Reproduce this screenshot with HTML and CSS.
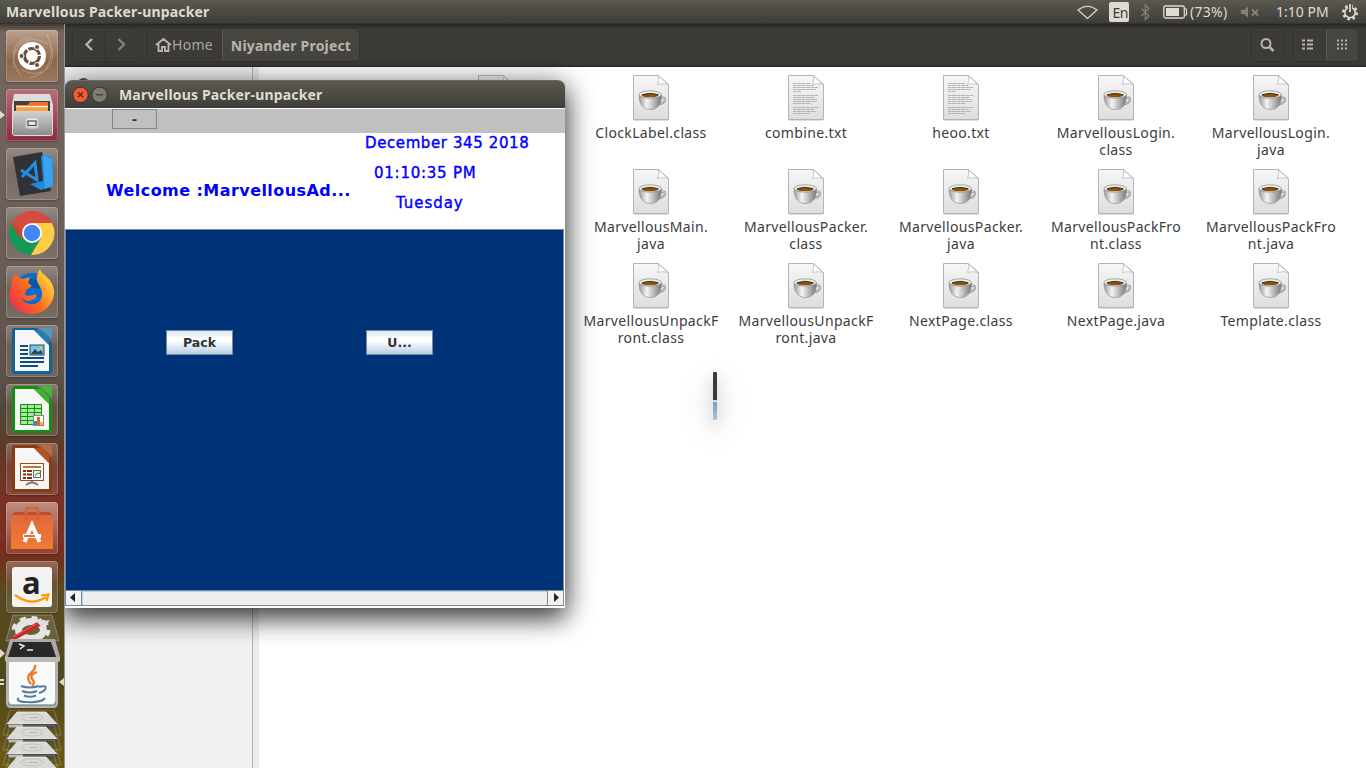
FILE: index.html
```
<!DOCTYPE html>
<html lang="en">
<head>
<meta charset="utf-8">
<title>Marvellous Packer-unpacker</title>
<link rel="stylesheet" href="styles.css">
</head>
<body>
<svg class="defs" width="0" height="0">
  <defs>
    <linearGradient id="paper" x1="0" y1="0" x2="0" y2="1"><stop offset="0" stop-color="#f6f6f6"/><stop offset="1" stop-color="#dedede"/></linearGradient>
    <linearGradient id="cup" x1="0" y1="0" x2="1" y2="0"><stop offset="0" stop-color="#999"/><stop offset=".35" stop-color="#f4f4f4"/><stop offset="1" stop-color="#777"/></linearGradient>
    <linearGradient id="steel" x1="0" y1="0" x2="0" y2="1"><stop offset="0" stop-color="#d2d2d2"/><stop offset="1" stop-color="#8c8c8c"/></linearGradient>
    <linearGradient id="bag" x1="0" y1="0" x2="0" y2="1"><stop offset="0" stop-color="#e0693c"/><stop offset="1" stop-color="#f07a35"/></linearGradient>
    <linearGradient id="fox" x1="0" y1=".8" x2="1" y2=".1"><stop offset="0" stop-color="#f0304c"/><stop offset=".45" stop-color="#fb6b20"/><stop offset="1" stop-color="#fff040"/></linearGradient>
    <symbol id="page" viewBox="0 0 36 46">
      <path d="M.5.5H25.500L35.500 9.500V44.500H.5Z" fill="url(#paper)" stroke="#b4b4b4"/>
      <path d="M1 45.500H35" stroke="#ddd"/>
      <path d="M25.500 1C26 4 25.500 7 24.500 9.500C28 8.500 32 8.500 35 9.500Z" fill="#fff" stroke="#b8b8b8" stroke-width=".8"/>
    </symbol>
    <symbol id="java" viewBox="0 0 36 46">
      <use href="#page" width="36" height="46"/>
      <path d="M27.500 23C34 20.500 33.500 28 25.500 29.500" fill="none" stroke="#8a8a8a" stroke-width="2"/>
      <path d="M27.500 23C34 20.500 33.500 28 25.500 29.500" fill="none" stroke="#e8e8e8" stroke-width=".8"/>
      <path d="M6 20C6 29 10 34.500 17.500 34.500S28.500 29 28.500 20Z" fill="url(#cup)" stroke="#888" stroke-width=".6"/>
      <ellipse cx="17.200" cy="19.500" rx="11.200" ry="3.700" fill="#eee" stroke="#888" stroke-width=".7"/>
      <ellipse cx="17" cy="20.300" rx="8.500" ry="2" fill="#8a5310"/>
      <path d="M9 19.700Q17 17 25.500 19.700" fill="none" stroke="#49300e"/>
    </symbol>
    <symbol id="txt" viewBox="0 0 36 46">
      <use href="#page" width="36" height="46"/>
      <path d="M5 8.500H22M5 10.500H25M5 12.500H30M5 14.500H28M5 16.500H13M5 20.500H30M5 22.500H27M5 24.500H29M5 26.500H29M5 28.500H23M5 32.500H30M5 34.500H26M5 36.500H28M5 38.500H22" stroke="#b4b4b4" stroke-width="1" stroke-dasharray="3 .5 5 .5"/>
    </symbol>
    <symbol id="disk" viewBox="0 0 60 27">
      <path d="M8 0H52L59 25H1Z" fill="none" stroke="#ffffff38"/>
      <path d="M15 2H44L55 14H5Z" fill="#d9d9d6" stroke="#eee" stroke-width=".8"/>
      <path d="M5 14H55V17Q55 18.500 53 18.500H7Q5 18.500 5 17Z" fill="#4a4a48"/><path d="M6 14.500H21V17.500H7Z" fill="#b5b5b2"/>
      <ellipse cx="30" cy="7.500" rx="11" ry="3.500" fill="none" stroke="#bdbdba" stroke-width=".8"/><path d="M27 7.500H36" stroke="#aaa" stroke-width=".8"/>
    </symbol>
  </defs>
</svg>

<header class="panel">
  <span class="panel-title">Marvellous Packer-unpacker</span>
  <svg class="indicators-a" width="80" height="24" viewBox="0 0 80 24">
    <path d="M1 10Q10.500 2.500 20 10L10.500 18.500Z" fill="none" stroke="#dfdbd2" stroke-width="1.200"/>
    <rect x="32" y="2" width="20" height="20" rx="2" fill="#dfdbd2"/>
    <text x="35.500" y="17.500" class="lang">En</text>
    <path d="M64.500 8.500L72 16L68.300 19.500V5L72 8.500L64.500 16" fill="none" stroke="#85827a" stroke-width="1.200"/>
  </svg>
  <svg class="battery" width="25" height="24" viewBox="0 0 25 24"><rect x=".8" y="6" width="20.500" height="12" rx="1.500" fill="none" stroke="#dfdbd2" stroke-width="1.300"/><path d="M3 8H16V16H3Z" fill="#dfdbd2"/><path d="M21.500 9H23.500V15H21.500" fill="none" stroke="#dfdbd2" stroke-width="1.200"/></svg>
  <span class="charge">(73%)</span>
  <svg class="mute" width="18" height="24" viewBox="0 0 18 24"><path d="M0 10H3L7 6.500V17.500L3 14H0Z" fill="#858279"/><path d="M11 9.500L17 15.500M17 9.500L11 15.500" stroke="#858279" stroke-width="1.800"/></svg>
  <span class="clock">1:10 PM</span>
  <svg class="gear" width="18" height="24" viewBox="0 0 18 24"><circle cx="9" cy="12.500" r="6.700" fill="none" stroke="#dfdbd2" stroke-width="2.600" stroke-dasharray="2.600 2.660"/><circle cx="9" cy="12.500" r="5.200" fill="none" stroke="#dfdbd2" stroke-width="1.600"/><path d="M9 3V12" stroke="#4a4943" stroke-width="4"/><path d="M9 4V12" stroke="#dfdbd2" stroke-width="1.800"/></svg>
</header>

<div class="desktop">
  <nav class="launcher">
    <div class="tile dash"><svg width="52" height="52" viewBox="0 0 52 52"><g fill="none" stroke="#ffffff38" stroke-width="1.200"><path d="M8 38C4 16 22 2 42 14M15 46C2 28 6 10 26 7M44 14C54 36 34 50 16 40M41 4C50 24 44 44 24 48"/></g><circle cx="26" cy="26" r="14" fill="#fff"/><circle cx="26" cy="26" r="7.500" fill="none" stroke="#66503f" stroke-width="3.200" stroke-dasharray="14.200 1.500"/><g fill="#66503f" stroke="#fff"><circle cx="15.500" cy="26" r="2.500"/><circle cx="31" cy="17" r="2.500"/><circle cx="31" cy="35" r="2.500"/></g></svg></div>
    <div class="tile files running"><svg width="52" height="52" viewBox="0 0 52 52"><path d="M8 5H44L47 16V44Q47 47 44 47H9Q6 47 6 44V16Z" fill="#dcdcdc"/><path d="M8 12H44V25H8Z" fill="#4b4039"/><path d="M10 16H22L24 13H42V25H10Z" fill="#ed7332"/><path d="M10 18H42V25H10Z" fill="#f6a04b"/><path d="M10 17.500H42" stroke="#fff0d0" stroke-width="1.300"/><path d="M7 22H46V46H7Z" fill="url(#steel)"/><rect x="20" y="29" width="12" height="10" rx="2" fill="#eee" stroke="#c5c5c5" stroke-width="1.500"/><rect x="22" y="32" width="8" height="4.500" fill="#eee" stroke="#444" stroke-width="1.200"/></svg></div>
    <div class="tile"><svg width="52" height="52" viewBox="0 0 52 52"><path d="M7 9L36 4L45 43L14 48Z" fill="#303236"/><path d="M35 8L41 7L47 11V38L35 42L24 36L37 33Z" fill="#2189dd"/><path d="M37 8L38 7L46 11L47 38L39 41Z" fill="#39a3ef"/><path d="M15 22L31 32L29 15L16 29" fill="none" stroke="#258de2" stroke-width="3"/></svg></div>
    <div class="tile"><svg width="52" height="52" viewBox="0 0 52 52"><circle cx="26" cy="26" r="22" fill="#cb4437"/><path d="M26 26L15 32L5 17A22 22 0 0 0 25 48L35 31Z" fill="#149a55"/><path d="M26 16H46A22 22 0 0 1 25 48L35 31Z" fill="#ffcc46"/><path d="M7 15A22 22 0 0 1 46 16H26L17 26Z" fill="#d54c3f"/><circle cx="26" cy="26" r="10" fill="#fff"/><circle cx="26" cy="26" r="8.200" fill="#4285f4"/></svg></div>
    <div class="tile"><svg width="52" height="52" viewBox="0 0 52 52"><circle cx="26" cy="25" r="18" fill="#0a6ccc"/><path d="M19 16Q27 9 33 16L34 23L26 22Z" fill="#0a55ac"/><path d="M9 8Q12 12 17 13L24 11L22 17L26 20L20 24L19 29Q24 31 30 28Q31 33 26 34C21 37 17 33 15 31C19 41 35 41 36 29C37 20 29 18 31 10Q32 5 34 3C35 9 46 11 48 24C49 38 38 48 26 48C8 48 0 34 5 20Q6 12 9 8Z" fill="url(#fox)"/></svg></div>
    <div class="tile"><svg width="52" height="52" viewBox="0 0 52 52"><path d="M9 3H31L46 18V46Q46 49 43 49H9Q6 49 6 46V6Q6 3 9 3Z" fill="#136295"/><path d="M34 3H46V14Z" fill="#4b9ac5"/><path d="M9 5H28L43 20V46H9Z" fill="#f6f6f6"/><path d="M28 5L43 20V13L35 5Z" fill="#1b80ba"/><path d="M14 21H22M14 25H22M14 29H22M14 33H38M14 37H38M14 41H32" stroke="#0c4f7c" stroke-width="2"/><rect x="24" y="20" width="14" height="10" fill="#78c2e5" stroke="#174c68"/><path d="M25 29L29 24L32 27L35 25L37 29Z" fill="#31474c"/><circle cx="35" cy="23" r="1.500" fill="#f9c537"/></svg></div>
    <div class="tile"><svg width="52" height="52" viewBox="0 0 52 52"><path d="M9 2H31L46 17V46Q46 49 43 49H9Q6 49 6 46V5Q6 2 9 2Z" fill="#178c10"/><path d="M34 2H46V14Z" fill="#3dbb35"/><path d="M9 5H28L43 20V46H9Z" fill="#f6f6f6"/><path d="M28 5L43 20V13L35 5Z" fill="#36b82a"/><rect x="14" y="20" width="22" height="21" fill="#a5e89b"/><path d="M14.500 20.500H35.500V40.500H14.500ZM14 24.500H36M14 28.500H36M14 32.500H36M14 36.500H36M21.500 20V41M28.500 20V41" fill="none" stroke="#16910f"/><rect x="27.500" y="31.500" width="10" height="10" fill="#f8f8f8" stroke="#888"/><path d="M28 37H31V41H28Z" fill="#3589cb"/><path d="M31 33H34V41H31Z" fill="#e06423"/><path d="M34 38H37V41H34Z" fill="#eeb73c"/></svg></div>
    <div class="tile"><svg width="52" height="52" viewBox="0 0 52 52"><path d="M9 2H31L46 17V46Q46 49 43 49H9Q6 49 6 46V5Q6 2 9 2Z" fill="#8a3b10"/><path d="M34 2H46V14Z" fill="#c0683c"/><path d="M9 5H28L43 20V46H9Z" fill="#f6f6f6"/><path d="M28 5L43 20V13L35 5Z" fill="#b5541f"/><rect x="14.500" y="20.500" width="23" height="17" fill="#fff" stroke="#a54717"/><path d="M17 24H35" stroke="#d66c2a" stroke-width="2"/><path d="M17 28H26M17 31.500H26M17 35H26" stroke="#793010" stroke-width="2" stroke-dasharray="3 1 5"/><rect x="27.500" y="27.500" width="7" height="7" fill="#eee" stroke="#666"/><path d="M29 33L31 30L33 31L35 28" fill="none" stroke="#269c34"/><path d="M26 38V40M20 42Q26 37 32 42" fill="none" stroke="#777" stroke-width="2"/></svg></div>
    <div class="tile software"><svg width="52" height="52" viewBox="0 0 52 52"><path d="M5 13H47V47H5Z" fill="url(#bag)"/><path d="M5 13L9 10H43L47 13Z" fill="#bd4d2d"/><path d="M20 18V9Q20 6 23 6H29Q32 6 32 9V18" fill="none" stroke="#d76142" stroke-width="3"/><path d="M18.500 40L26 23L33.500 40" fill="none" stroke="#fff" stroke-width="4"/><path d="M17 34H35" stroke="#fff" stroke-width="4"/><path d="M18 34H29" stroke="#e95420" stroke-width="1.700"/></svg></div>
    <div class="tile"><svg width="52" height="52" viewBox="0 0 52 52"><rect x="6" y="6" width="40" height="40" rx="3" fill="#f3f3f3"/><text x="16" y="32.500" class="amazon">a</text><path d="M9 34Q25 46 40 36M35 34.500L42.500 33.500L40.500 40" fill="none" stroke="#ff9900" stroke-width="2.200"/></svg></div>
    <svg class="stack" width="65" height="155" viewBox="0 0 65 155">
      <path d="M13 2H52L59 28H6Z" fill="#ffffff20" stroke="#ffffff45"/>
      <ellipse cx="31" cy="17" rx="12.500" ry="8.500" fill="none" stroke="#e4e4e2" stroke-width="7"/><ellipse cx="31" cy="17" rx="17.500" ry="12" fill="none" stroke="#e4e4e2" stroke-width="4" stroke-dasharray="6 5.700"/>
      <path d="M11 24.500L37 9L41 12.500L15 27Z" fill="#c7272b"/><path d="M13 24L37 10.500" stroke="#e8696b"/><path d="M37 9L40 5L44 8L50 7L47 11L41 13Z" fill="#ddd"/>
      <path d="M10 26H55L60 44V48H5V44Z" fill="#aaa"/><path d="M13 29H51L56 44H8Z" fill="#292929"/><path d="M19 31L24 33L20 36M27 37H33" fill="none" stroke="#eee" stroke-width="1.500"/>
      <rect x="7.500" y="46.500" width="49" height="47" rx="3" fill="#fafafa" stroke="#b5b3ae" stroke-width="3"/><path d="M9 89V92H55V89" fill="none" stroke="#54708c"/>
      <path d="M5 44H60V47Q60 49 57 49H8Q5 49 5 47Z" fill="#bbb9b5"/>
      <path d="M35 52C37 60 22 60 31 71M37 59C31 61 30 64 33 67Q35 70 32 73" fill="none" stroke="#e97b25" stroke-width="2.300"/>
      <path d="M21 73Q29 76 39 73M22 78Q30 81 37 78M24 82.500Q30 85 36 82.500M19 85C11 90 42 91 45 85M39 74C48 71 48 77 39 80" fill="none" stroke="#557b9f" stroke-width="2"/>
      <use href="#disk" x="2" y="97" width="60" height="27"/><use href="#disk" x="2" y="112" width="60" height="27"/><use href="#disk" x="2" y="127" width="60" height="27"/><use href="#disk" x="2" y="142" width="60" height="27"/>
      <path d="M0 36L5 40.500L0 45ZM64 65L59 69L64 73Z" fill="#dfdbd2"/><path d="M0 67H4M0 71H4" stroke="#dfdbd2" stroke-width="2"/>
    </svg>
  </nav>

  <main class="browser">
    <div class="toolbar">
      <div class="group nav-group"><span class="cell"><svg width="32" height="30" viewBox="0 0 32 30"><path d="M19 9L13.500 14.500L19 20" fill="none" stroke="#bab6aa" stroke-width="2.300"/></svg></span><span class="cell split"><svg width="31" height="30" viewBox="0 0 31 30"><path d="M12.500 9L18 14.500L12.500 20" fill="none" stroke="#85827a" stroke-width="2.300"/></svg></span></div>
      <div class="group path-group"><span class="cell home"><svg width="17" height="16" viewBox="0 0 17 16"><path d="M1 8L8.500 2L16 8M3.500 7V14H7V10H10V14H13.500V7" fill="none" stroke="#bab6aa" stroke-width="1.900"/></svg>Home</span><span class="cell current">Niyander Project</span></div>
      <div class="group search"><svg width="31" height="30" viewBox="0 0 31 30"><circle cx="14" cy="13.500" r="4.500" fill="none" stroke="#bab6aa" stroke-width="2"/><path d="M17.500 17L21.500 21" stroke="#bab6aa" stroke-width="2.500"/></svg></div>
      <div class="group view-group"><span class="cell"><svg width="32" height="30" viewBox="0 0 32 30"><path d="M8 10.500H11M13 10.500H19M8 14.500H11M13 14.500H19M8 18.500H11M13 18.500H19" stroke="#bab6aa" stroke-width="2"/></svg></span><span class="cell current"><svg width="31" height="30" viewBox="0 0 31 30"><path d="M10 10.500H20M10 14.500H20M10 18.500H20" stroke="#bab6aa" stroke-width="2" stroke-dasharray="2"/></svg></span></div>
    </div>
    <div class="panes">
      <aside class="sidebar"><span class="recent"></span></aside>
      <section class="grid">
        <div class="file"><svg class="faded"><use href="#page"/></svg></div>
        <div class="file"><svg><use href="#java"/></svg>ClockLabel.class</div>
        <div class="file"><svg><use href="#txt"/></svg>combine.txt</div>
        <div class="file"><svg><use href="#txt"/></svg>heoo.txt</div>
        <div class="file"><svg><use href="#java"/></svg>MarvellousLogin.<br>class</div>
        <div class="file"><svg><use href="#java"/></svg>MarvellousLogin.<br>java</div>
        <div class="file"></div>
        <div class="file"><svg><use href="#java"/></svg>MarvellousMain.<br>java</div>
        <div class="file"><svg><use href="#java"/></svg>MarvellousPacker.<br>class</div>
        <div class="file"><svg><use href="#java"/></svg>MarvellousPacker.<br>java</div>
        <div class="file"><svg><use href="#java"/></svg>MarvellousPackFro<br>nt.class</div>
        <div class="file"><svg><use href="#java"/></svg>MarvellousPackFro<br>nt.java</div>
        <div class="file"></div>
        <div class="file"><svg><use href="#java"/></svg>MarvellousUnpackF<br>ront.class</div>
        <div class="file"><svg><use href="#java"/></svg>MarvellousUnpackF<br>ront.java</div>
        <div class="file"><svg><use href="#java"/></svg>NextPage.class</div>
        <div class="file"><svg><use href="#java"/></svg>NextPage.java</div>
        <div class="file"><svg><use href="#java"/></svg>Template.class</div>
      </section>
    </div>
  </main>
</div>

<div class="sliver"></div>

<section class="window">
  <div class="titlebar">
    <svg width="36" height="18" viewBox="0 0 36 18"><circle cx="8.500" cy="8.800" r="7.700" fill="#ee5f32" stroke="#33322e"/><path d="M6 6.300L11 11.300M11 6.300L6 11.300" stroke="#5e2614" stroke-width="1.300"/><circle cx="27.500" cy="8.800" r="7.700" fill="#7c7b74" stroke="#33322e"/><path d="M24 8.800H31" stroke="#3a3934" stroke-width="1.200"/></svg>
    <span>Marvellous Packer-unpacker</span>
  </div>
  <div class="menubar"><div class="dash-button">-</div></div>
  <div class="banner">
    <div class="welcome">Welcome :MarvellousAd...</div>
    <div class="when"><div class="date">December 345 2018</div><div class="time">01:10:35 PM</div><div class="day">Tuesday</div></div>
  </div>
  <div class="canvas"><div class="button">Pack</div><div class="button">U...</div></div>
  <div class="scrollbar">
    <svg class="arrow" width="15" height="14" viewBox="0 0 15 14"><path d="M9 2V11L4 6.500Z" fill="#222"/></svg>
    <div class="track"></div>
    <svg class="arrow" width="15" height="14" viewBox="0 0 15 14"><path d="M6 2V11L11 6.500Z" fill="#222"/></svg>
  </div>
</section>
</body>
</html>
```
FILE: styles.css
```
* { box-sizing: border-box; }
body { margin: 0; width: 1366px; height: 768px; overflow: hidden; position: relative; display: flex; flex-direction: column; background: #fff; font-family: "Noto Sans", "Open Sans", sans-serif; font-size: 14px; color: #3c3c3c; }
svg { display: block; flex: none; }
.defs { position: absolute; }

.panel { height: 24px; flex: none; display: flex; align-items: center; padding: 0 7px 0 6px; background: linear-gradient(#5b594f, #3e3d38 95%, #2d2c29); color: #dfdbd2; line-height: 24px; }
.panel-title { flex: none; font-weight: 700; width: 1071px; letter-spacing: .17px; white-space: nowrap; }
.indicators-a { margin-right: 6px; }
.lang { font: 14px "Noto Sans", sans-serif; fill: #3c3b37; letter-spacing: -.6px; }
.charge { width: 51px; flex: none; padding-left: 2px; letter-spacing: .3px; }
.mute { margin-left: 2px; }
.clock { flex: none; margin-left: 17px; width: 65px; white-space: nowrap; }
.amazon { font: 700 31px "Open Sans", sans-serif; fill: #222; }

.desktop { flex: 1; display: flex; min-height: 0; }
.launcher { width: 65px; flex: none; display: flex; flex-direction: column; gap: 7px; padding: 6px 0 0 6px; border-right: 1px solid #8e98a4; background: linear-gradient(#403a35, #75675f 8px, #6b5d55 30%, #5c5048 48%, #504634 52%, #603a28 57%, #7b3024 65%, #74301f 72%, #594a22 76%, #51471d 88%, #685b16); }
.tile { width: 52px; height: 52px; flex: none; border-radius: 4px; position: relative; background: linear-gradient(#ffffff42, #ffffff10 45%, #ffffff20); box-shadow: inset 0 0 0 1px #ffffff35, 0 1px 2px #0004; }
.dash { background: linear-gradient(#bba18d, #8e674a 60%, #9c7a61); }
.files { background: linear-gradient(#b96d7b, #8b2a3e); }
.software { background: linear-gradient(#be8c80, #91402f); }
.running::before { content: ""; position: absolute; left: -6px; top: 22px; border: 4px solid transparent; border-left: 5px solid #dfdbd2; border-right: 0; }
.stack { margin: -7px 0 0 -6px; }

.browser { flex: 1; display: flex; flex-direction: column; }
.toolbar { height: 43px; flex: none; display: flex; padding: 4px 7px 0 7px; background: linear-gradient(#282724, #3c3b37 5px, #3c3b37 39px, #363531); color: #aaa79d; border-bottom: 1px solid #282724; }
.group { height: 34px; display: flex; align-items: center; border: 1px solid #33322e; border-radius: 5px; box-shadow: inset 0 0 0 1px #403f3b; }
.cell { height: 32px; display: flex; align-items: center; justify-content: center; }
.nav-group { width: 66px; margin-right: 9px; }
.nav-group .cell { width: 32px; }
.split { border-left: 1px solid #32312d; }
.path-group { width: 213px; }
.home { width: 74px; padding-bottom: 1px; padding-right: 2px; color: #aaa79d; letter-spacing: .3px; }
.current { background: #464540; border-left: 1px solid #5a584f; border-radius: 0 4px 4px 0; }
.path-group .current { width: 137px; font-weight: 700; color: #bab6aa; white-space: nowrap; letter-spacing: .18px; }
.search { width: 33px; margin-left: auto; margin-right: 9px; }
.view-group { width: 66px; }
.view-group .cell { width: 32px; }

.panes { flex: 1; display: flex; min-height: 0; background: #fff; }
.sidebar { width: 194px; flex: none; background: #f2f1f0; border-right: 6px solid #edecea; box-shadow: inset -1px 0 #b6b4b0; padding: 11px 0 0 12px; }
.recent { display: block; width: 13px; height: 13px; border-radius: 50%; background: #555; }
.grid { flex: 1; display: grid; grid-template-columns: repeat(6, 155px); grid-auto-rows: 94px; align-content: start; padding: 8px 0 0 159.5px; }
.file { display: flex; flex-direction: column; align-items: center; font-size: 14px; letter-spacing: .35px; line-height: 17px; text-align: center; }
.file svg { width: 36px; height: 46px; margin-bottom: 3px; }
.faded { opacity: .8; }

.sliver { position: absolute; left: 713px; top: 372px; width: 4px; height: 49px; border-radius: 1px; background: linear-gradient(#3c3b37 28px, #bbb 28px, #fff 30px, #7d9bbd 30px, #a9c4e0 48px, #fff 48px); box-shadow: 0 8px 28px #0006, 0 5px 14px #0003; }

.window { position: absolute; left: 65px; top: 80px; width: 500px; height: 528px; display: flex; flex-direction: column; background: #fff; border-radius: 7px 7px 0 0; box-shadow: 0 10px 24px #000a, 0 3px 34px #0005; clip-path: inset(-60px -70px -70px 0); font-family: "DejaVu Sans", sans-serif; }
.titlebar { height: 28px; flex: none; display: flex; align-items: center; gap: 11px; padding-left: 7px; border-radius: 7px 7px 0 0; background: linear-gradient(#5b594f, #3e3d38); border-top: 1px solid #6c6a60; color: #dfdbd2; font: 700 14px "Noto Sans", sans-serif; letter-spacing: .17px; }
.menubar { height: 24px; margin-top: 1px; flex: none; background: #c0c0c0; padding-left: 47px; }
.dash-button { width: 45px; height: 20px; border: 1px solid #7a8a99; text-align: center; font-weight: 700; font-size: 13px; line-height: 20px; color: #333; }
.banner { height: 96px; flex: none; display: flex; color: #00f; }
.welcome { width: 300px; padding: 48px 0 0 41px; font-size: 16px; line-height: 20px; letter-spacing: .44px; font-weight: 700; white-space: nowrap; }
.when { display: flex; flex-direction: column; gap: 10px; font-size: 15px; line-height: 20px; letter-spacing: .6px; -webkit-text-stroke: .4px #00f; }
.time { padding-left: 9px; letter-spacing: .75px; }
.day { padding-left: 31px; letter-spacing: .95px; }
.canvas { height: 361px; flex: none; display: flex; gap: 133px; padding: 100px 0 0 100px; background: #003278; border: 1px solid #7a8a99; border-bottom: 0; margin-right: 1px; }
.button { width: 67px; height: 25px; border: 1px solid #7a8a99; background: linear-gradient(#dde8f3, #fff 35%, #fff 42%, #b8cfe5); text-align: center; color: #333; font-weight: 700; font-size: 12.500px; line-height: 23px; }
.scrollbar { height: 16px; flex: none; display: flex; margin-right: 1px; border: 1px solid #7a8a99; background: #eee; }
.arrow { background: #f3f3f3; }
.track { flex: 1; border: solid #7a8a99; border-width: 0 1px; background: #eee; box-shadow: inset 1px 1px #b8cfe5; }
```
